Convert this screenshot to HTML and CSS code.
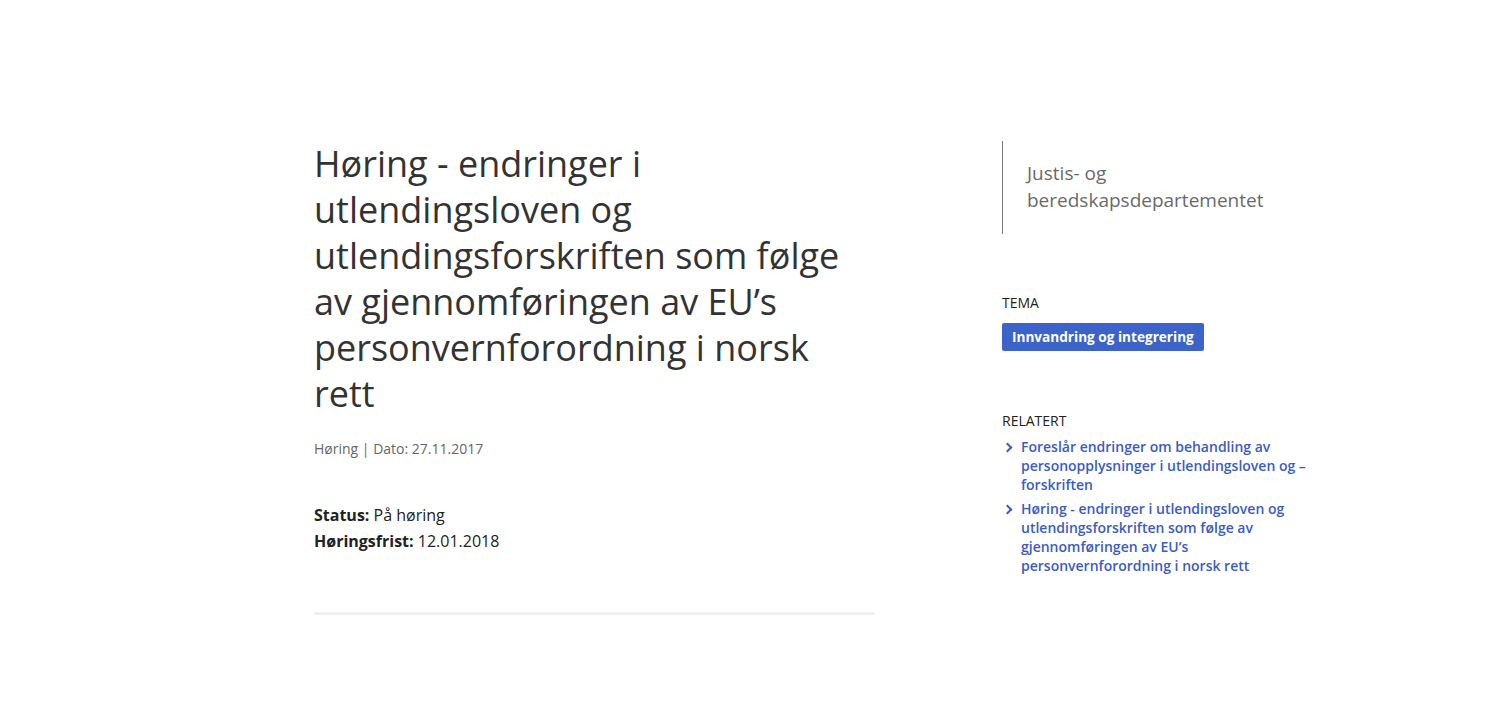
FILE: index.html
```html
<!DOCTYPE html>
<html lang="no">
<head>
<meta charset="utf-8">
<title>Høring</title>
<link rel="stylesheet" href="styles.css">
</head>
<body>
<div class="page">
  <main class="main">
    <h1 class="title">Høring - endringer i utlendingsloven og utlendingsforskriften som følge av gjennomføringen av EU’s personvernforordning i norsk rett</h1>
    <p class="meta">Høring | Dato: 27.11.2017</p>
    <div class="facts">
      <p><strong>Status:</strong> På høring</p>
      <p><strong>Høringsfrist:</strong> 12.01.2018</p>
    </div>
    <hr class="divider">
  </main>
  <aside class="side">
    <div class="owner">Justis- og beredskapsdepartementet</div>
    <div class="block tema">
      <div class="label">TEMA</div>
      <a class="tag" href="#">Innvandring og integrering</a>
    </div>
    <div class="block relatert">
      <div class="label">RELATERT</div>
      <ul class="related">
        <li><a href="#">Foreslår endringer om behandling av personopplysninger i utlendingsloven og –forskriften</a></li>
        <li><a href="#">Høring - endringer i utlendingsloven og utlendingsforskriften som følge av gjennomføringen av EU’s personvernforordning i norsk rett</a></li>
      </ul>
    </div>
  </aside>
</div>
</body>
</html>
```
FILE: styles.css
```css
* { box-sizing: border-box; }
html, body { margin: 0; padding: 0; background: #fff; }
body { font-family: "Open Sans", "Noto Sans", sans-serif; color: #333; }
.page {
  display: flex;
  padding: 141px 0 0 314px;
}
.main { width: 560px; }
.title {
  margin: 0;
  font-weight: 400;
  font-size: 36px;
  line-height: 46px;
  color: #333;
}
.meta {
  margin: 22px 0 0;
  font-size: 14px;
  line-height: 20px;
  color: #666;
}
.facts { margin-top: 43px; }
.facts p {
  margin: 0;
  font-size: 16px;
  line-height: 26px;
  color: #222;
}
.facts strong { font-weight: 700; }
.divider {
  margin: 58px 0 0;
  border: 0;
  height: 3px;
  background: #f1eff1;
}
.side {
  margin-left: 128px;
  width: 310px;
}
.owner {
  border-left: 1px solid #777;
  padding: 19px 0 20px 24px;
  font-size: 19px;
  line-height: 27px;
  color: #6a6a6a;
  width: 290px;
}
.tema { margin-top: 59px; }
.relatert { margin-top: 60px; }
.label {
  font-size: 14px;
  line-height: 20px;
  color: #222;
}
.tag {
  display: inline-block;
  margin-top: 10px;
  background: #3b63c9;
  color: #fff;
  font-weight: 700;
  font-size: 13.6px;
  height: 28px;
  line-height: 28px;
  padding: 0 10px;
  border-radius: 2px;
  text-decoration: none;
}
.related {
  list-style: none;
  margin: 6px 0 0;
  padding: 0;
  width: 310px;
}
.related li {
  position: relative;
  padding-left: 19px;
  font-size: 14px;
  line-height: 19px;
  margin-bottom: 5px;
}
.related li::before {
  content: "";
  position: absolute;
  left: 2px;
  top: 7px;
  width: 5px;
  height: 5px;
  border-right: 2px solid #3b5bc6;
  border-top: 2px solid #3b5bc6;
  transform: rotate(45deg);
}
.related a {
  color: #3b5bc6;
  font-weight: 600;
  text-decoration: none;
}
```
